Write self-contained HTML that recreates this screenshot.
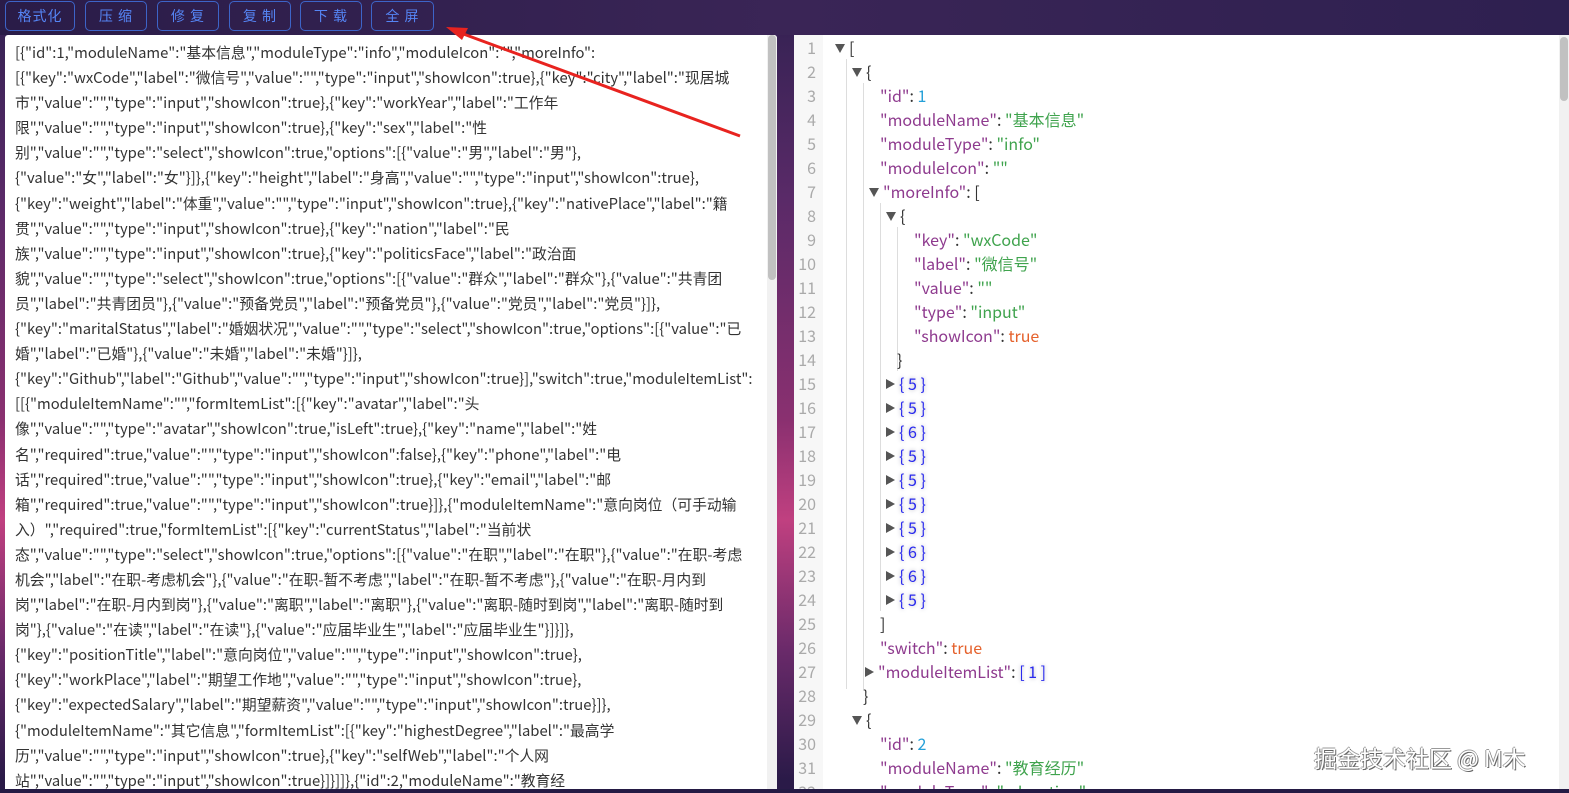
<!DOCTYPE html>
<html><head><meta charset="utf-8"><style>
*{margin:0;padding:0;box-sizing:border-box}
body{width:1569px;height:793px;overflow:hidden;position:relative;font-family:"Noto Sans CJK SC","Liberation Sans",sans-serif;
background:linear-gradient(180deg,#2d1d4a 0,#3a2356 40px,#5a2a68 200px,#8a3070 420px,#c04080 520px,#6a2a6a 650px,#2a1a48 780px)}
.top{position:absolute;left:0;top:0;width:1569px;height:35px;background:linear-gradient(90deg,#2a1c48,#3a2556 50%,#2e2050)}
.btn{position:absolute;top:1px;height:30px;border:1px solid #3d64c8;border-radius:5px;color:#5585f5;font-size:14px;text-align:center;line-height:28px;letter-spacing:1px}
.left{position:absolute;left:5px;top:35px;width:772px;height:754px;background:#fff;border-radius:3px 3px 0 0;overflow:hidden}
.lt{position:absolute;left:10px;top:5px;font-size:14.8px;color:#333;line-height:25.1px;white-space:nowrap}
.sb1{position:absolute;left:762px;top:0;width:10px;height:754px;background:#f1f1f1}
.sb1 i{position:absolute;left:1px;top:0;width:8px;height:245px;background:#c1c1c1;border-radius:4px}
.right{position:absolute;left:794px;top:35px;width:775px;height:754px;background:#fff;overflow:hidden}
.gut{position:absolute;left:0;top:0;width:29px;height:754px;background:#f7f7f7}
.ln{position:absolute;left:0;width:22px;text-align:right;color:#aaa;font-size:16px;line-height:24px}
.r{position:absolute;font-size:16px;line-height:24px;white-space:nowrap;color:#333}
.k{color:#8e3a8e}.s{color:#3fa34d}.n{color:#25a0d8}.b{color:#e5622d}.c{color:#2a2aee;text-shadow:0 0 4px #aab}
.tri{display:inline-block;width:0;height:0;border-left:5px solid transparent;border-right:5px solid transparent;border-top:9px solid #555;margin-right:4px;vertical-align:1px}
.tr{display:inline-block;width:0;height:0;border-top:5px solid transparent;border-bottom:5px solid transparent;border-left:9px solid #555;margin-right:4px;vertical-align:1px}
.g{position:absolute;width:1px;background:#ddd}
.sb2{position:absolute;left:765px;top:0;width:10px;height:754px;background:#f1f1f1}
.sb2 i{position:absolute;left:1px;top:2px;width:8px;height:64px;background:#c1c1c1;border-radius:4px}
.wm{position:absolute;left:1314px;top:740px;font-size:23px;color:#fff;text-shadow:1px 1px 0 #666,-1px 0 0 #999,0 -1px 0 #999;letter-spacing:0}
.bot{position:absolute;left:0;top:789px;width:1569px;height:4px;background:#241a44}
</style></head><body>
<div class="top"></div>
<div class="btn" style="left:5px;width:70px">格式化</div>
<div class="btn" style="left:85px;width:62px">压 缩</div>
<div class="btn" style="left:157px;width:62px">修 复</div>
<div class="btn" style="left:229px;width:62px">复 制</div>
<div class="btn" style="left:300px;width:62px">下 载</div>
<div class="btn" style="left:371px;width:63px">全 屏</div>

<div class="left"><div class="lt">
[{"id":1,"moduleName":"基本信息","moduleType":"info","moduleIcon":"","moreInfo":<br>
[{"key":"wxCode","label":"微信号","value":"","type":"input","showIcon":true},{"key":"city","label":"现居城<br>
市","value":"","type":"input","showIcon":true},{"key":"workYear","label":"工作年<br>
限","value":"","type":"input","showIcon":true},{"key":"sex","label":"性<br>
别","value":"","type":"select","showIcon":true,"options":[{"value":"男","label":"男"},<br>
{"value":"女","label":"女"}]},{"key":"height","label":"身高","value":"","type":"input","showIcon":true},<br>
{"key":"weight","label":"体重","value":"","type":"input","showIcon":true},{"key":"nativePlace","label":"籍<br>
贯","value":"","type":"input","showIcon":true},{"key":"nation","label":"民<br>
族","value":"","type":"input","showIcon":true},{"key":"politicsFace","label":"政治面<br>
貌","value":"","type":"select","showIcon":true,"options":[{"value":"群众","label":"群众"},{"value":"共青团<br>
员","label":"共青团员"},{"value":"预备党员","label":"预备党员"},{"value":"党员","label":"党员"}]},<br>
{"key":"maritalStatus","label":"婚姻状况","value":"","type":"select","showIcon":true,"options":[{"value":"已<br>
婚","label":"已婚"},{"value":"未婚","label":"未婚"}]},<br>
{"key":"Github","label":"Github","value":"","type":"input","showIcon":true}],"switch":true,"moduleItemList":<br>
[[{"moduleItemName":"","formItemList":[{"key":"avatar","label":"头<br>
像","value":"","type":"avatar","showIcon":true,"isLeft":true},{"key":"name","label":"姓<br>
名","required":true,"value":"","type":"input","showIcon":false},{"key":"phone","label":"电<br>
话","required":true,"value":"","type":"input","showIcon":true},{"key":"email","label":"邮<br>
箱","required":true,"value":"","type":"input","showIcon":true}]},{"moduleItemName":"意向岗位（可手动输<br>
入）","required":true,"formItemList":[{"key":"currentStatus","label":"当前状<br>
态","value":"","type":"select","showIcon":true,"options":[{"value":"在职","label":"在职"},{"value":"在职-考虑<br>
机会","label":"在职-考虑机会"},{"value":"在职-暂不考虑","label":"在职-暂不考虑"},{"value":"在职-月内到<br>
岗","label":"在职-月内到岗"},{"value":"离职","label":"离职"},{"value":"离职-随时到岗","label":"离职-随时到<br>
岗"},{"value":"在读","label":"在读"},{"value":"应届毕业生","label":"应届毕业生"}]}]},<br>
{"key":"positionTitle","label":"意向岗位","value":"","type":"input","showIcon":true},<br>
{"key":"workPlace","label":"期望工作地","value":"","type":"input","showIcon":true},<br>
{"key":"expectedSalary","label":"期望薪资","value":"","type":"input","showIcon":true}]},<br>
{"moduleItemName":"其它信息","formItemList":[{"key":"highestDegree","label":"最高学<br>
历","value":"","type":"input","showIcon":true},{"key":"selfWeb","label":"个人网<br>
站","value":"","type":"input","showIcon":true}]}]]},{"id":2,"moduleName":"教育经
</div><div class="sb1"><i></i></div></div>

<div class="right">
<div class="gut"></div>
<div class="g" style="left:52px;top:24px;height:630px"></div>
<div class="g" style="left:69px;top:48px;height:606px"></div>
<div class="g" style="left:86px;top:168px;height:408px"></div>
<div class="g" style="left:103px;top:192px;height:144px"></div>
<div id="L"></div>
<div class="sb2"><i></i></div>
</div>
<div class="wm">掘金技术社区 @ M木</div>
<div class="bot"></div>
<svg style="position:absolute;left:0;top:0" width="1569" height="793"><line x1="740" y1="136" x2="458" y2="32" stroke="#e8231f" stroke-width="3"/><polygon points="446,27 468,28 462,40" fill="#e8231f"/></svg>
<script>
var rows=[
[41,'<span class="tri"></span>['],
[58,'<span class="tri"></span>{'],
[86,'<span class="k">"id"</span>: <span class="n">1</span>'],
[86,'<span class="k">"moduleName"</span>: <span class="s">"基本信息"</span>'],
[86,'<span class="k">"moduleType"</span>: <span class="s">"info"</span>'],
[86,'<span class="k">"moduleIcon"</span>: <span class="s">""</span>'],
[75,'<span class="tri"></span><span class="k">"moreInfo"</span>: ['],
[92,'<span class="tri"></span>{'],
[120,'<span class="k">"key"</span>: <span class="s">"wxCode"</span>'],
[120,'<span class="k">"label"</span>: <span class="s">"微信号"</span>'],
[120,'<span class="k">"value"</span>: <span class="s">""</span>'],
[120,'<span class="k">"type"</span>: <span class="s">"input"</span>'],
[120,'<span class="k">"showIcon"</span>: <span class="b">true</span>'],
[103,'}']];
[5,5,6,5,5,5,5,6,6,5].forEach(function(n){rows.push([92,'<span class="tr"></span><span class="c">{ '+n+' }</span>'])});
rows.push([86,']'],[86,'<span class="k">"switch"</span>: <span class="b">true</span>'],[71,'<span class="tr"></span><span class="k">"moduleItemList"</span>: <span class="c">[ 1 ]</span>'],[69,'}'],[58,'<span class="tri"></span>{'],[86,'<span class="k">"id"</span>: <span class="n">2</span>'],[86,'<span class="k">"moduleName"</span>: <span class="s">"教育经历"</span>'],[86,'<span class="k">"moduleType"</span>: <span class="s">"education"</span>']);
var h='';rows.forEach(function(r,i){var t=i*24;h+='<div class="ln" style="top:'+t+'px">'+(i+1)+'</div><div class="r" style="left:'+r[0]+'px;top:'+t+'px">'+r[1]+'</div>'});
document.getElementById('L').innerHTML=h;
</script>
</body></html>
